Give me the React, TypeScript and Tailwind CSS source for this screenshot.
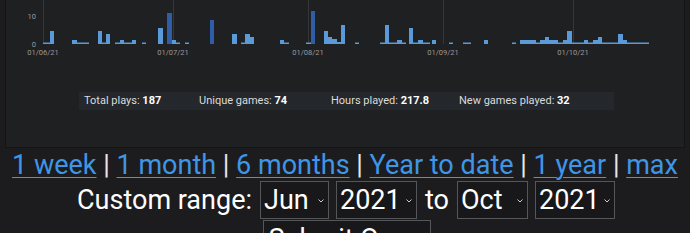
const bars: [number, number, number, boolean?][] = [
  [43, 7, 1.5], [50, 4, 13],
  [72, 5, 4], [77, 12, 1.5],
  [98, 4, 13], [102, 4, 1.5], [106, 4, 10],
  [115, 5, 1.5], [120, 4, 4], [124, 8, 1.5], [132, 4, 4],
  [142, 4, 1.5],
  [158, 5, 16],
  [167, 5, 31, true], [172, 4, 4], [176, 4, 1.5],
  [185, 4, 1.5],
  [210, 4, 24, true],
  [232, 5, 10],
  [241, 4, 1.5], [245, 5, 10], [250, 4, 7],
  [280, 4, 4], [284, 5, 1.5],
  [306, 5, 1.5], [311, 4, 33, true],
  [324, 4, 13], [328, 4, 7], [332, 5, 5], [337, 4, 2], [341, 4, 19],
  [355, 4, 1.5],
  [380, 5, 1.5], [385, 4, 19], [389, 8, 1.5], [397, 5, 4], [402, 4, 1.5],
  [409, 4, 16], [413, 5, 1.5], [418, 5, 4], [423, 7, 1.5],
  [432, 4, 4],
  [449, 4, 1.5], [463, 8, 1.5], [484, 4, 4],
  [512, 4, 1.5], [520, 7, 4], [527, 5, 4], [532, 4, 4], [536, 4, 1.5],
  [540, 5, 4], [545, 4, 7], [549, 4, 4], [553, 5, 4], [558, 5, 1.5],
  [563, 4, 4], [567, 5, 13], [572, 12, 1.5], [584, 4, 4], [588, 5, 1.5],
  [593, 5, 4], [598, 4, 7], [602, 16, 1.5], [618, 5, 10], [623, 4, 4],
  [627, 22, 1.5],
];

const months = [
  { x: 43, label: "01/06/21" },
  { x: 173, label: "01/07/21" },
  { x: 308, label: "01/08/21" },
  { x: 443, label: "01/09/21" },
  { x: 573, label: "01/10/21" },
];

const Chart = () => {
  const base = 44;
  return (
    <svg width="678" height="60" className="block">
      <g transform="translate(-6,0)">
        {months.map((m) => (
          <line key={m.x} x1={m.x + 0.5} x2={m.x + 0.5} y1={0} y2={base} stroke="#35363a" strokeWidth="1" />
        ))}
        {bars.map(([x, w, h, dark], i) => (
          <rect key={i} x={x} y={base - h} width={w} height={h} fill={dark ? "#2f5ea6" : "#5b9ad8"} />
        ))}
        <text x="36" y="19" fontSize="7.5" fill="#9a9a9a" textAnchor="end" fontFamily="Roboto">10</text>
        <text x="36" y="47" fontSize="7.5" fill="#9a9a9a" textAnchor="end" fontFamily="Roboto">0</text>
        {months.map((m) => (
          <text key={m.label} x={m.x} y="55" fontSize="7.5" fill="#9a9a9a" textAnchor="middle" fontFamily="Roboto">
            {m.label}
          </text>
        ))}
      </g>
    </svg>
  );
};

const Select = ({ value, width }: { value: string; width: string }) => (
  <div className={`flex h-[38px] items-center justify-between border border-[#55565a] bg-[#18181a] pl-[3px] pr-[4px] ${width}`}>
    <span>{value}</span>
    <svg width="6" height="4" viewBox="0 0 6 4" className="mt-[2px]">
      <path d="M0.5 0.5 L3 3 L5.5 0.5" stroke="#cfcfcf" strokeWidth="1" fill="none" />
    </svg>
  </div>
);

const Link = ({ children }: { children: string }) => (
  <a className="text-[#3f95e6] underline decoration-1 underline-offset-[3px]">{children}</a>
);

export default function App() {
  return (
    <div className="h-[233px] w-[690px] overflow-hidden bg-[#1c1c1e] font-['Roboto',sans-serif] text-white">
      {/* chart card */}
      <div className="mx-[5px] h-[148px] border-x border-b border-[#141416] bg-[#1f2022]">
        <Chart />
        {/* stats row */}
        <div className="ml-[73px] mt-[32px] flex h-[18px] w-[535px] items-center bg-[#24272b] pl-[5px] text-[11px] text-[#dcdcdc]">
          <span className="w-[115px]">Total plays: <b className="text-white">187</b></span>
          <span className="w-[132px]">Unique games: <b className="text-white">74</b></span>
          <span className="w-[128px]">Hours played: <b className="text-white">217.8</b></span>
          <span>New games played: <b className="text-white">32</b></span>
        </div>
      </div>

      {/* range links */}
      <div className="mt-[1px] whitespace-nowrap text-center text-[27px] leading-[32px] text-[#e6e6e6]">
        <Link>1 week</Link> | <Link>1 month</Link> | <Link>6 months</Link> | <Link>Year to date</Link> | <Link>1 year</Link> | <Link>max</Link>
      </div>

      {/* custom range */}
      <div className="ml-[2px] flex items-center justify-center gap-[7px] text-[27px] leading-none">
        <span className="mr-[1px]">Custom range:</span>
        <Select value="Jun" width="w-[69px]" />
        <Select value="2021" width="w-[81px]" />
        <span className="mx-[1px]">to</span>
        <Select value="Oct" width="w-[71px]" />
        <Select value="2021" width="w-[80px]" />
      </div>
      <div className="flex justify-center">
        <div className="ml-[3px] mt-[1px] flex h-[38px] w-[168px] items-center overflow-hidden whitespace-nowrap border border-[#55565a] bg-[#18181a] pl-[5px] text-[27px] leading-none">
          Submit Query
        </div>
      </div>
    </div>
  );
}
